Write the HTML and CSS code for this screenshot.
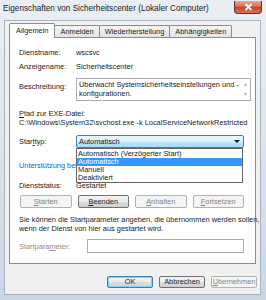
FILE: index.html
```html
<!DOCTYPE html>
<html lang="de">
<head>
    <meta charset="UTF-8">
    <title>Eigenschaften von Sicherheitscenter</title>
    <link rel="stylesheet" href="styles.css">
</head>
<body>

<div class="window">
    <div class="titlebar">
        <span class="title">Eigenschaften von Sicherheitscenter (Lokaler Computer)</span>
        <div class="close">
            <svg width="9" height="8" viewBox="0 0 9 8"><path d="M1.5 1 L7.5 7 M7.5 1 L1.5 7" stroke="#fff" stroke-width="1.8"/></svg>
        </div>
    </div>

    <div class="body">
        <div class="tabs">
            <div class="tab active">Allgemein</div>
            <div class="tab">Anmelden</div>
            <div class="tab">Wiederherstellung</div>
            <div class="tab">Abhängigkeiten</div>
        </div>

        <div class="panel">
            <div class="row r1">
                <span class="label">Dienstname:</span>
                <span>wscsvc</span>
            </div>
            <div class="row r2">
                <span class="label">Anzeigename:</span>
                <span>Sicherheitscenter</span>
            </div>
            <div class="row desc">
                <span class="label">Beschreibung:</span>
                <div class="textarea">
                    <div class="textarea-text">Überwacht Systemsicherheitseinstellungen und -<br>konfigurationen.</div>
                    <div class="scroll">
                        <span>&#9652;</span>
                        <span>&#9662;</span>
                    </div>
                </div>
            </div>

            <div class="path-label"><u>P</u>fad zur EXE-Datei:</div>
            <div class="path">C:\Windows\System32\svchost.exe -k LocalServiceNetworkRestricted</div>

            <div class="row start">
                <span class="label">Star<u>t</u>typ:</span>
                <div class="combo">
                    <span class="combo-value">Automatisch</span>
                    <span class="arrow"></span>
                    <!-- aufgeklappte Liste -->
                    <div class="droplist">
                        <div class="item">Automatisch (Verzögerter Start)</div>
                        <div class="item selected">Automatisch</div>
                        <div class="item">Manuell</div>
                        <div class="item">Deaktiviert</div>
                    </div>
                </div>
            </div>

            <div class="link">Unterstützung bei</div>

            <div class="row status">
                <span class="label">Dienststatus:</span>
                <span>Gestartet</span>
            </div>

            <div class="svc-buttons">
                <div class="btn disabled"><u>S</u>tarten</div>
                <div class="btn"><u>B</u>eenden</div>
                <div class="btn disabled"><u>A</u>nhalten</div>
                <div class="btn disabled"><u>F</u>ortsetzen</div>
            </div>

            <p class="hint">Sie können die Startparameter angeben, die übernommen werden sollen,<br>wenn der Dienst von hier aus gestartet wird.</p>

            <div class="row params">
                <span class="label grey">Startpara<u>m</u>eter:</span>
                <div class="input"></div>
            </div>
        </div>

        <div class="footer">
            <div class="btn default">OK</div>
            <div class="btn">Abbrechen</div>
            <div class="btn disabled"><u>Ü</u>bernehmen</div>
        </div>
    </div>
</div>

</body>
</html>
```

FILE: styles.css
```css
* {
    box-sizing: border-box;
}

body {
    margin: 0;
    width: 266px;
    height: 300px;
    overflow: hidden;
    font-family: "Liberation Sans", Arial, sans-serif;
    font-size: 7.4px;
    color: #1a1a1a;
    background: #cfdbe7;
}

.window {
    height: 300px;
    padding: 0 5px 5px 4px;
    background: linear-gradient(#e9eef3, #dfe6ee 40%, #c8d6e4);
}

.titlebar {
    height: 20px;
    display: flex;
    align-items: flex-start;
    justify-content: space-between;
}

.title {
    font-size: 8.2px;
    margin: 4px 0 0 -1px;
    color: #222;
}

.close {
    width: 28px;
    height: 13px;
    margin: 1px -1px 0 0;
    border: 1px solid #6b2d2d;
    border-top: none;
    border-radius: 0 0 4px 4px;
    background: linear-gradient(#eba898, #d9604c 50%, #c63f2e 51%, #dc7355);
    display: flex;
    align-items: center;
    justify-content: center;
}

.body {
    height: 275px;
    background: #f0f0f0;
    border: 1px solid #a8b4c0;
    padding: 2px 4px 0 4px;
}

/* Reiter */
.tabs {
    display: flex;
    height: 14px;
    align-items: flex-end;
    position: relative;
    z-index: 1;
}

.tab {
    height: 12px;
    padding: 0 5px;
    line-height: 11px;
    border: 1px solid #898c95;
    border-bottom: none;
    margin-left: -1px;
    background: linear-gradient(#f4f4f4, #e4e4e4);
    border-radius: 2px 2px 0 0;
}

.tab:first-child {
    margin-left: 0;
}

.tab.active {
    height: 15px;
    background: #fff;
    padding: 0 6px;
    line-height: 13px;
    margin-bottom: -1px;
    position: relative;
}

.panel {
    background: #fff;
    border: 1px solid #898c95;
    height: 227px;
    padding: 7px 11px 0 9px;
}

.row {
    display: flex;
    align-items: center;
}

.label {
    width: 57px;
    flex: none;
}

.r1, .r2 {
    height: 14px;
}

.desc {
    margin-top: 5px;
    align-items: flex-start;
}

.desc .label {
    padding-top: 4px;
}

.textarea {
    flex: 1;
    height: 23px;
    border: 1px solid #abadb3;
    display: flex;
    line-height: 9px;
}

.textarea-text {
    flex: 1;
    padding: 1px 2px;
    white-space: nowrap;
}

.scroll {
    width: 9px;
    display: flex;
    flex-direction: column;
    justify-content: space-between;
    align-items: center;
    color: #b0b0b0;
    font-size: 6px;
    line-height: 9px;
    padding: 1px 0;
}

.path-label {
    margin-top: 8px;
    line-height: 9px;
}

.path {
    line-height: 10px;
    white-space: nowrap;
}

.start {
    margin-top: 7px;
    height: 13px;
}

.combo {
    flex: 1;
    height: 13px;
    border: 1px solid #3c7fb1;
    border-radius: 2px;
    background: linear-gradient(#eaf6fd, #d9f0fc 50%, #bee6fd 51%, #a7d9f5);
    display: flex;
    align-items: center;
    padding-left: 2px;
    position: relative;
}

.combo-value {
    flex: 1;
}

.arrow {
    width: 0;
    height: 0;
    border-left: 3px solid transparent;
    border-right: 3px solid transparent;
    border-top: 3px solid #111;
    margin-right: 3px;
}

/* aufgeklappte Liste liegt ueber dem Inhalt */
.droplist {
    position: absolute;
    top: 12px;
    left: -1px;
    right: 0;
    background: #fff;
    border: 1px solid #646464;
    padding: 1px 0 0;
    z-index: 2;
}

.item {
    height: 8px;
    line-height: 8px;
    padding-left: 1px;
}

.item.selected {
    background: #3399ff;
    color: #fff;
}

.link {
    margin-top: 13px;
    color: #0066cc;
    line-height: 10px;
    white-space: nowrap;
}

.status {
    margin-top: 9px;
    height: 10px;
}

.svc-buttons {
    margin-top: 5px;
    display: grid;
    grid-template-columns: repeat(4, 1fr);
    gap: 6px;
    padding-left: 1px;
}

.btn {
    height: 13px;
    border: 1px solid #707070;
    border-radius: 2px;
    background: linear-gradient(#f2f2f2, #ebebeb 50%, #dddddd 51%, #cfcfcf);
    text-align: center;
    line-height: 11px;
}

.btn.disabled {
    border-color: #adb2b5;
    background: #f4f4f4;
    color: #838383;
}

.hint {
    margin: 7px 0 0 0;
    line-height: 9px;
    white-space: nowrap;
}

.params {
    margin-top: 6px;
    height: 14px;
}

.params .label {
    width: 68px;
}

.grey {
    color: #8d8d8d;
}

.input {
    flex: 1;
    height: 14px;
    border: 1px solid #abadb3;
}

.footer {
    display: flex;
    justify-content: flex-end;
    gap: 6px;
    margin-top: 12px;
    margin-right: -1px;
}

.footer .btn {
    width: 46px;
    height: 12px;
    line-height: 10px;
}

.btn.default {
    border-color: #3c7fb1;
    box-shadow: inset 0 0 0 1px #7cd4f6;
}
```
